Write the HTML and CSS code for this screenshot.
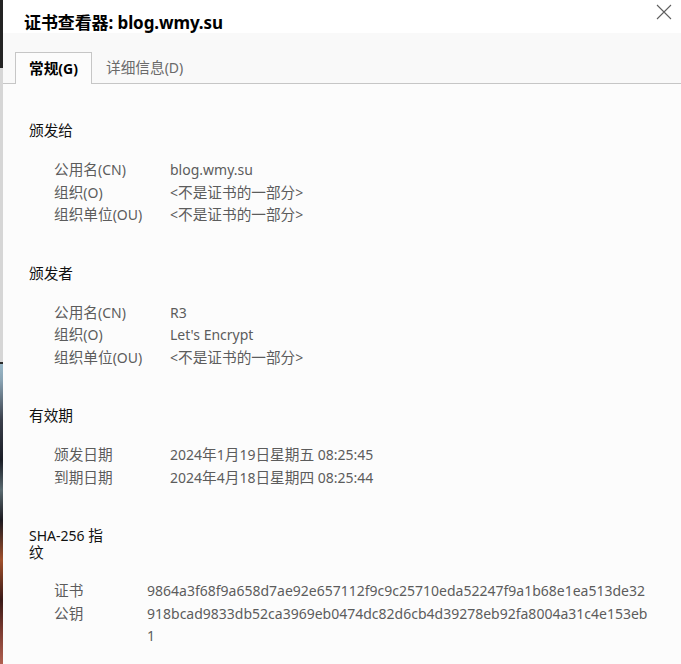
FILE: index.html
```html
<!DOCTYPE html>
<html lang="zh-CN">
<head>
<meta charset="utf-8">
<title>证书查看器</title>
<link rel="stylesheet" href="styles.css">
</head>
<body>
<div class="screen">
  <div class="edge"></div>
  <div class="dialog">
    <div class="titlebar">
      <h1 class="title">证书查看器: blog.wmy.su</h1>
      <button class="close" aria-label="关闭">
        <svg width="16" height="16" viewBox="0 0 16 16"><path d="M1 1L15 15M15 1L1 15" stroke="#5f5f5f" stroke-width="1.1" fill="none"/></svg>
      </button>
    </div>
    <div class="tabbar">
      <div class="tab active"><span class="zh">常规</span>(G)</div>
      <div class="tab"><span class="zh">详细信息</span>(D)</div>
    </div>
    <div class="content">
      <section class="section">
        <h2 class="head"><span class="zh">颁发给</span></h2>
        <div class="grid">
          <div class="label"><span class="zh">公用名</span>(CN)</div><div class="value">blog.wmy.su</div>
          <div class="label"><span class="zh">组织</span>(O)</div><div class="value">&lt;<span class="zh">不是证书的一部分</span>&gt;</div>
          <div class="label"><span class="zh">组织单位</span>(OU)</div><div class="value">&lt;<span class="zh">不是证书的一部分</span>&gt;</div>
        </div>
      </section>
      <section class="section">
        <h2 class="head"><span class="zh">颁发者</span></h2>
        <div class="grid">
          <div class="label"><span class="zh">公用名</span>(CN)</div><div class="value">R3</div>
          <div class="label"><span class="zh">组织</span>(O)</div><div class="value">Let's Encrypt</div>
          <div class="label"><span class="zh">组织单位</span>(OU)</div><div class="value">&lt;<span class="zh">不是证书的一部分</span>&gt;</div>
        </div>
      </section>
      <section class="section">
        <h2 class="head"><span class="zh">有效期</span></h2>
        <div class="grid">
          <div class="label"><span class="zh">颁发日期</span></div><div class="value">2024<span class="zh">年</span>1<span class="zh">月</span>19<span class="zh">日星期五</span> 08:25:45</div>
          <div class="label"><span class="zh">到期日期</span></div><div class="value">2024<span class="zh">年</span>4<span class="zh">月</span>18<span class="zh">日星期四</span> 08:25:44</div>
        </div>
      </section>
      <section class="section">
        <h2 class="head narrow">SHA-256 <span class="zh">指纹</span></h2>
        <div class="grid hash">
          <div class="label"><span class="zh">证书</span></div><div class="value">9864a3f68f9a658d7ae92e657112f9c9c25710eda52247f9a1b68e1ea513de32</div>
          <div class="label"><span class="zh">公钥</span></div><div class="value">918bcad9833db52ca3969eb0474dc82d6cb4d39278eb92fa8004a31c4e153eb1</div>
        </div>
      </section>
    </div>
  </div>
</div>
</body>
</html>
```

FILE: styles.css
```css
* { box-sizing: border-box; }
html, body { margin: 0; padding: 0; height: 100%; }
body {
  font-family: "Noto Sans", "Noto Sans CJK SC", sans-serif;
  background: #fcfcfc;
  overflow: hidden;
}
.zh {
  font-family: "Noto Sans CJK SC", "Noto Sans", sans-serif;
  font-size: 14.67px;
  line-height: 1;
}
.screen {
  display: flex;
  height: 664px;
  overflow: hidden;
}
.edge {
  width: 3px;
  flex: none;
  background: linear-gradient(to bottom,
    #232323 0, #232323 68px,
    #d6d6d6 68px, #d6d6d6 362px,
    #2a2a2a 362px, #2a2a2a 364px,
    #9ab8c8 364px, #8aa4b4 380px, #3a3f4a 420px, #1a1d26 460px,
    #5a6a70 490px, #1c1a20 520px, #a0502c 560px, #3a1a18 600px,
    #7a3a30 630px, #b06050 664px);
}
.dialog {
  flex: 1;
  display: flex;
  flex-direction: column;
  min-width: 0;
  min-height: 0;
}
.titlebar {
  flex: none;
  height: 33px;
  background: #ffffff;
  display: flex;
  align-items: flex-start;
  justify-content: space-between;
  padding-left: 21px;
}
.title {
  margin: 0;
  font-size: 17px;
  font-weight: 700;
  line-height: 20px;
  padding-top: 13px;
  color: #000;
  letter-spacing: -0.1px;
}
.close {
  border: 0;
  background: transparent;
  padding: 0;
  margin: 4px 9px 0 0;
  width: 16px;
  height: 16px;
  display: flex;
}
.tabbar {
  flex: none;
  height: 51px;
  background: #f9f9f9;
  border-bottom: 1px solid #c6c6c6;
  display: flex;
  align-items: flex-end;
  padding-left: 12px;
}
.tab {
  height: 32px;
  line-height: 31px;
  font-size: 14px;
  color: #6a6a6a;
  padding: 0 14px;
  margin-bottom: -1px;
}
.tab.active {
  color: #000;
  font-weight: 700;
  background: #fcfcfc;
  border: 1px solid #c6c6c6;
  border-bottom: 0;
  height: 32px;
  padding: 0 0 0 13px;
  width: 77px;
}
.content {
  flex: 1 0 auto;
  background: #fcfcfc;
  padding: 39px 0 0 26px;
}
.section { margin-bottom: 39px; }
.head {
  margin: 0 0 20px 0;
  font-size: 14px;
  font-weight: 400;
  line-height: 16px;
  color: #111;
}
.head.narrow {
  width: 86px;
  line-height: 17px;
  margin-top: -1px;
  margin-bottom: 19px;
}
.grid {
  display: grid;
  grid-template-columns: 116px auto;
  padding-left: 25px;
  font-size: 14px;
  line-height: 22.5px;
  color: #5c5c5c;
}
.grid.hash {
  grid-template-columns: 93px 504px;
}
.value { word-break: break-all; }
```
